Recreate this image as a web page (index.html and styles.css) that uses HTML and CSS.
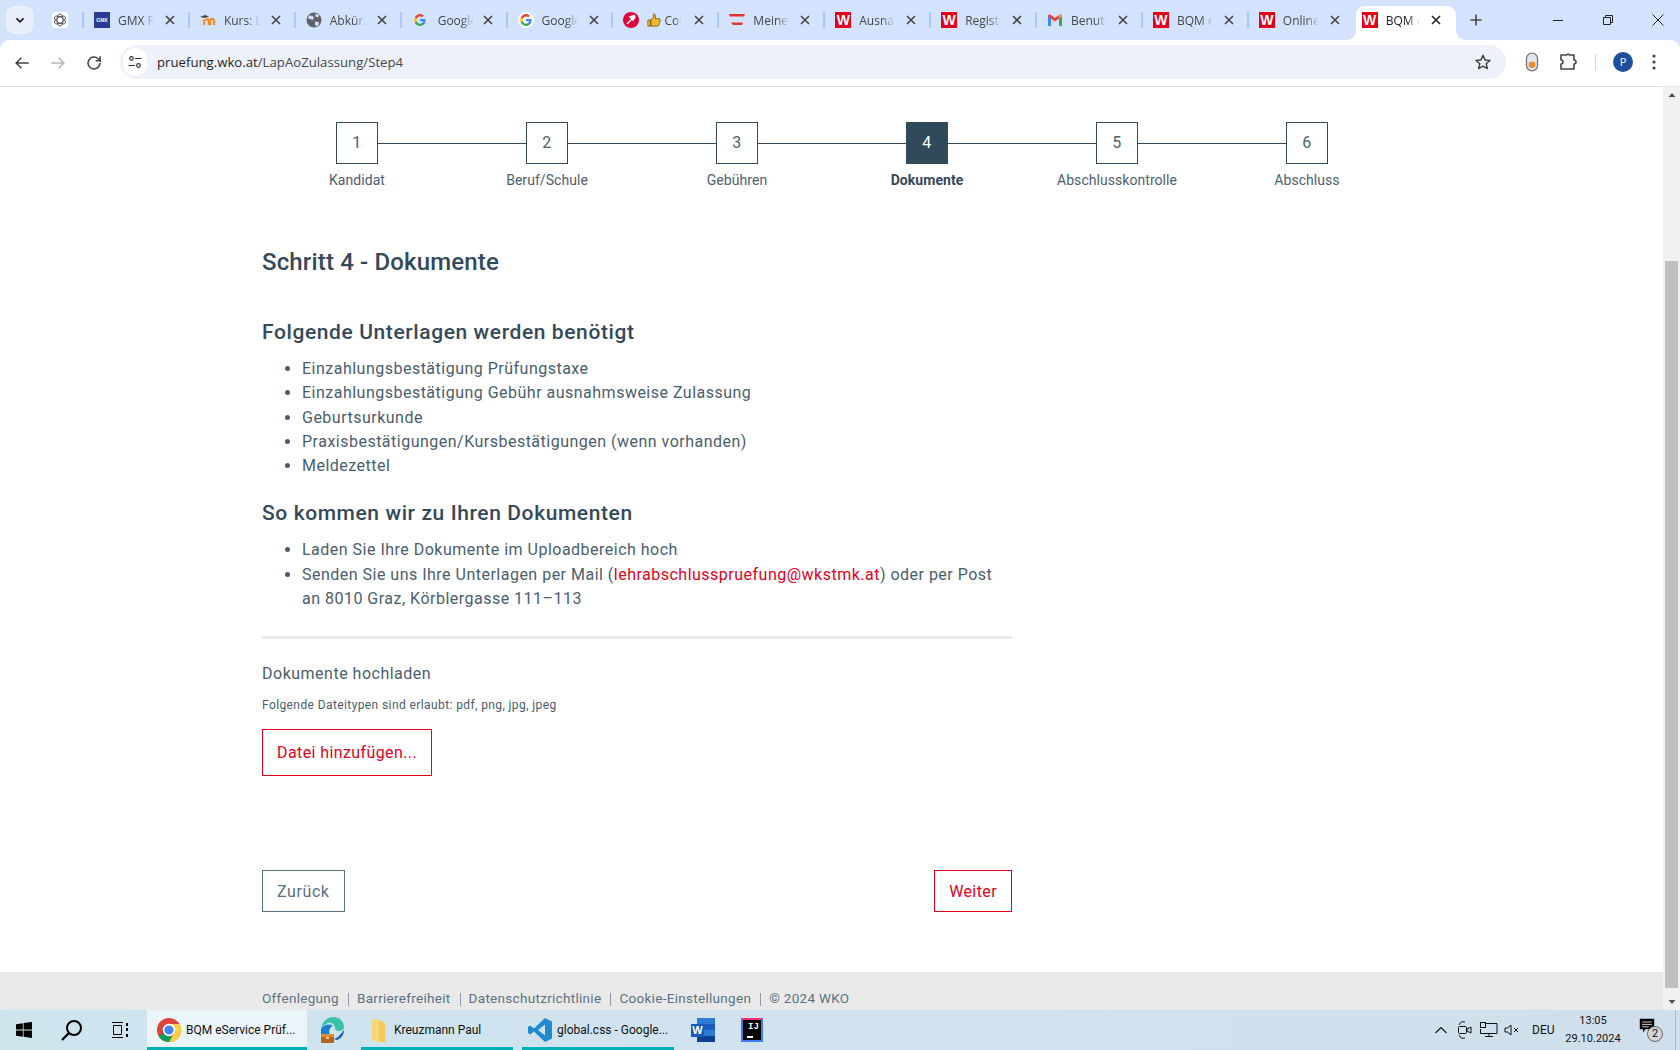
FILE: index.html
```html
<!DOCTYPE html>
<html lang="de">
<head>
<meta charset="utf-8">
<title>BQM eService Prüfung</title>
<link rel="stylesheet" href="styles.css">
</head>
<body>
<svg class="defs" width="0" height="0" aria-hidden="true">
  <symbol id="i-close" viewBox="0 0 16 16"><path d="M4 4l8 8M12 4l-8 8" fill="none" stroke="currentColor" stroke-width="1.6"/></symbol>
  <symbol id="i-g" viewBox="0 0 16 16">
    <path d="M15.4 8.2c0-.6 0-1.100-.2-1.600H8v3h4.100c-.2 1-.7 1.800-1.500 2.300v2h2.500c1.500-1.400 2.300-3.300 2.300-5.700z" fill="#4285f4"/>
    <path d="M8 16c2.100 0 3.800-.7 5.100-1.900l-2.500-2c-.7.500-1.600.8-2.600.8-2 0-3.700-1.400-4.300-3.200H1.100v2C2.400 14.300 5 16 8 16z" fill="#34a853"/>
    <path d="M3.700 9.700c-.3-1-.3-2.400 0-3.400v-2H1.100c-.9 1.800-.9 5.600 0 7.400z" fill="#fbbc05"/>
    <path d="M8 3.200c1.100 0 2.100.4 2.900 1.100l2.200-2.200C11.800.8 10.100 0 8 0 5 0 2.400 1.700 1.100 4.300l2.600 2C4.300 4.500 6 3.200 8 3.200z" fill="#ea4335"/>
  </symbol>
</svg>
<div class="screen">
  <header class="chrome">
    <div class="tabstrip">
      <button class="tab-search"><svg width="12" height="12" viewBox="0 0 12 12"><path d="M2.500 4.300L6 7.800l3.500-3.500" fill="none" stroke="#1f1f1f" stroke-width="1.800"/></svg></button>
      <div class="pinned">
        <span class="fav-chip"><svg width="14" height="14" viewBox="0 0 16 16"><g fill="none" stroke="#444" stroke-width="1"><ellipse cx="8" cy="8" rx="7" ry="3.400" transform="rotate(30 8 8)"/><ellipse cx="8" cy="8" rx="7" ry="3.400" transform="rotate(-30 8 8)"/><ellipse cx="8" cy="8" rx="7" ry="3.400" transform="rotate(90 8 8)"/></g></svg></span>
      </div>
      <div class="tab"><span class="fav gmx">GMX</span><span class="title">GMX F</span><svg class="x"><use href="#i-close"/></svg></div>
      <div class="tab"><svg class="fav" viewBox="0 0 16 16"><path d="M5 7.500c3-2 4.500-1.500 4.500.5v5H7.800V8.500L5 8.500v4.500H3.300V8.500H1z" fill="#f98012"/><path d="M9.500 13V8.500c0-2 1.800-3 3.500-2.500 1.500.4 2 1.500 2 3V13h-1.800V9c0-1.800-2-1.800-2 0v4z" fill="#f98012"/><path d="M0 5l5-2 4 1.500L5 6z" fill="#444"/></svg><span class="title">Kurs: L</span><svg class="x"><use href="#i-close"/></svg></div>
      <div class="tab"><svg class="fav" viewBox="0 0 16 16"><circle cx="8" cy="8" r="7.500" fill="#5f6368"/><path d="M3 3.500l3.500.3 1.500 2L6.500 8l-2-1-2.500-.5zM9 9.500l3.500.5.500 2-2.500 2.500L9 12.500zM9.500 1.500L13 3l-1 2.500-2.500-1z" fill="#d3e3fd"/></svg><span class="title">Abkürz</span><svg class="x"><use href="#i-close"/></svg></div>
      <div class="tab"><svg class="fav small"><use href="#i-g"/></svg><span class="title">Google</span><svg class="x"><use href="#i-close"/></svg></div>
      <div class="tab"><span class="fav g-chip"><svg width="14" height="14"><use href="#i-g"/></svg></span><span class="title">Google</span><svg class="x"><use href="#i-close"/></svg></div>
      <div class="tab tab-col"><svg class="fav" viewBox="0 0 16 16"><circle cx="8" cy="8" r="8" fill="#e2003c"/><path d="M4 12l4.500-4.500M7 5l4-1.500L12 5l-2 3z" stroke="#fff" stroke-width="1.500" fill="#fff"/></svg><svg class="thumb" viewBox="0 0 16 16"><path d="M1 8h3v7H1zM4.500 8l3-3.500V1c1.500 0 2.500 1 2.300 3L9.500 6.500H14c1 0 1.500 1 1 2l-1.500 5.500c-.2.700-.8 1-1.500 1H4.500z" fill="#f3b62b" stroke="#5a4410" stroke-width=".8"/></svg><span class="title t-short">Col</span><svg class="x"><use href="#i-close"/></svg></div>
      <div class="tab"><svg class="fav" viewBox="0 0 16 16"><path d="M0 2h16l-1 2.500H1z" fill="#e3342a"/><path d="M2 10.500h12l-1 2.500H4z" fill="#e3342a"/></svg><span class="title">Meine</span><svg class="x"><use href="#i-close"/></svg></div>
      <div class="tab"><span class="fav wko">W</span><span class="title">Ausnah</span><svg class="x"><use href="#i-close"/></svg></div>
      <div class="tab"><span class="fav wko">W</span><span class="title">Registr</span><svg class="x"><use href="#i-close"/></svg></div>
      <div class="tab"><svg class="fav" viewBox="0 0 16 16"><path d="M1 14V4l3 .8V14z" fill="#4285f4"/><path d="M12 14V4.800L15 4v10z" fill="#34a853"/><path d="M1 4c0-1.500 1.500-2 2.500-1.300L8 6l4.500-3.300C13.500 2 15 2.500 15 4l-3 2.500L8 9.500 4 6.500z" fill="#ea4335"/><path d="M12 2.800L15 4l-3 2.500z" fill="#fbbc05"/></svg><span class="title">Benutz</span><svg class="x"><use href="#i-close"/></svg></div>
      <div class="tab"><span class="fav wko">W</span><span class="title">BQM e</span><svg class="x"><use href="#i-close"/></svg></div>
      <div class="tab"><span class="fav wko">W</span><span class="title">Online</span><svg class="x"><use href="#i-close"/></svg></div>
      <div class="tab active"><span class="fav wko">W</span><span class="title">BQM e</span><svg class="x"><use href="#i-close"/></svg></div>
      <svg class="newtab" width="16" height="16" viewBox="0 0 16 16"><path d="M8 2.500v11M2.500 8h11" stroke="#444" stroke-width="1.600"/></svg>
      <div class="winctl">
        <svg width="16" height="16" viewBox="0 0 16 16"><path d="M3 8.500h10" stroke="#222" stroke-width="1"/></svg>
        <svg width="16" height="16" viewBox="0 0 16 16"><path d="M3.500 5.500h7v7h-7zM5.500 5.500v-2h7v7h-2" fill="none" stroke="#222" stroke-width="1"/></svg>
        <svg width="16" height="16" viewBox="0 0 16 16"><path d="M2.500 2.500l11 11M13.500 2.500l-11 11" stroke="#222" stroke-width="1"/></svg>
      </div>
    </div>
    <div class="toolbar">
      <svg class="tool" viewBox="0 0 16 16"><path d="M14 8H3M7.500 3.300L2.800 8l4.700 4.700" fill="none" stroke="#444" stroke-width="1.400"/></svg>
      <svg class="tool" viewBox="0 0 16 16"><path d="M2 8h11M8.500 3.300L13.200 8l-4.700 4.700" fill="none" stroke="#b4b6b9" stroke-width="1.400"/></svg>
      <svg class="tool" viewBox="0 0 16 16"><path d="M13.300 8a5.300 5.300 0 1 1-1.600-3.800L13.500 6V2M13.500 6H9.500" fill="none" stroke="#444" stroke-width="1.400"/></svg>
      <div class="omnibox">
        <span class="site-chip"><svg width="16" height="16" viewBox="0 0 16 16"><g fill="none" stroke="#333" stroke-width="1.200"><circle cx="4.500" cy="4.500" r="1.800"/><path d="M8 4.500h6.500M1.500 11.500H8"/><circle cx="11.500" cy="11.500" r="1.800"/></g></svg></span>
        <span class="url"><span class="host">pruefung.wko.at</span>/LapAoZulassung/Step4</span>
        <svg class="star" width="18" height="18" viewBox="0 0 18 18"><path d="M9 2.300l2 4.600 5 .5-3.800 3.300 1.100 4.900L9 13.100l-4.300 2.500 1.100-4.900L2 7.400l5-.5z" fill="none" stroke="#444" stroke-width="1.500" stroke-linejoin="round"/></svg>
      </div>
      <svg class="ext1" width="16" height="20" viewBox="0 0 12 18"><rect x="1" y="1" width="10" height="16" rx="5" fill="#e6e6e6" stroke="#777" stroke-width="1.200"/><circle cx="6" cy="11.500" r="3" fill="#f28a30"/></svg>
      <svg class="ext2" width="20" height="20" viewBox="0 0 20 20"><path d="M3 3h5.500a1.800 1.800 0 0 1 3 0H16v5a1.800 1.800 0 0 1 0 4v5H3v-5a1.800 1.800 0 0 0 0-4z" fill="none" stroke="#444" stroke-width="1.600" stroke-linejoin="round"/></svg>
      <span class="tb-sep"></span>
      <span class="avatar">P</span>
      <svg class="menu" width="16" height="18" viewBox="0 0 16 18"><g fill="#444"><circle cx="8" cy="3" r="1.600"/><circle cx="8" cy="9" r="1.600"/><circle cx="8" cy="15" r="1.600"/></g></svg>
    </div>
  </header>
  <div class="viewport">
    <main class="page">
      <div class="content">
        <ol class="stepper">
          <li class="step"><div class="step-top"><span class="line hidden"></span><span class="box">1</span><span class="line"></span></div><span class="step-label">Kandidat</span></li>
          <li class="step"><div class="step-top"><span class="line"></span><span class="box">2</span><span class="line"></span></div><span class="step-label">Beruf/Schule</span></li>
          <li class="step"><div class="step-top"><span class="line"></span><span class="box">3</span><span class="line"></span></div><span class="step-label">Gebühren</span></li>
          <li class="step current"><div class="step-top"><span class="line"></span><span class="box">4</span><span class="line"></span></div><span class="step-label">Dokumente</span></li>
          <li class="step"><div class="step-top"><span class="line"></span><span class="box">5</span><span class="line"></span></div><span class="step-label">Abschlusskontrolle</span></li>
          <li class="step"><div class="step-top"><span class="line"></span><span class="box">6</span><span class="line hidden"></span></div><span class="step-label">Abschluss</span></li>
        </ol>
        <section class="form-col">
          <h1 class="h-step">Schritt 4 - Dokumente</h1>
          <h2 class="h-sec first">Folgende Unterlagen werden benötigt</h2>
          <ul class="doc-list">
            <li>Einzahlungsbestätigung Prüfungstaxe</li>
            <li>Einzahlungsbestätigung Gebühr ausnahmsweise Zulassung</li>
            <li>Geburtsurkunde</li>
            <li>Praxisbestätigungen/Kursbestätigungen (wenn vorhanden)</li>
            <li>Meldezettel</li>
          </ul>
          <h2 class="h-sec second">So kommen wir zu Ihren Dokumenten</h2>
          <ul class="doc-list">
            <li>Laden Sie Ihre Dokumente im Uploadbereich hoch</li>
            <li>Senden Sie uns Ihre Unterlagen per Mail (<a class="mail">lehrabschlusspruefung@wkstmk.at</a>) oder per Post an 8010 Graz, Körblergasse 111–113</li>
          </ul>
          <hr class="rule">
          <p class="upload-title">Dokumente hochladen</p>
          <p class="upload-hint">Folgende Dateitypen sind erlaubt: pdf, png, jpg, jpeg</p>
          <button class="btn btn-red btn-file">Datei hinzufügen...</button>
          <div class="nav-row">
            <button class="btn btn-grey">Zurück</button>
            <button class="btn btn-red">Weiter</button>
          </div>
        </section>
      </div>
      <footer class="page-footer">
        <nav class="foot-links"><a>Offenlegung</a><a>Barrierefreiheit</a><a>Datenschutzrichtlinie</a><a>Cookie-Einstellungen</a><a>© 2024 WKO</a></nav>
      </footer>
    </main>
    <div class="scrollbar">
      <svg class="arrow" width="16" height="16" viewBox="0 0 16 16"><path d="M4.500 10L8 6l3.500 4z" fill="#505050"/></svg>
      <div class="thumb-bar"></div>
      <svg class="arrow" width="16" height="16" viewBox="0 0 16 16"><path d="M4.500 6L8 10l3.500-4z" fill="#505050"/></svg>
    </div>
  </div>
  <footer class="taskbar">
    <span class="tb-start"><svg width="16" height="16" viewBox="0 0 16 16"><path d="M0 2.200l6.800-1V7.600H0zM7.600 1L16 0v7.600H7.600zM0 8.400h6.800v6.400L0 13.800zM7.600 8.400H16V16l-8.400-1.200z" fill="#000"/></svg></span>
    <span class="tb-search"><svg width="24" height="24" viewBox="0 0 24 24"><circle cx="14" cy="10" r="7" fill="none" stroke="#000" stroke-width="2"/><path d="M9 15l-7 7" stroke="#000" stroke-width="2.400"/></svg></span>
    <span class="tb-view"><svg width="18" height="18" viewBox="0 0 18 18"><g fill="none" stroke="#000"><path d="M1 1.500h11M1 16.500h11M2.500 4.500h8v9h-8z"/></g><path d="M15 2h2v3h-2zM15 7h2v3h-2zM15 13h2v3h-2z" fill="#000"/></svg></span>
    <div class="tb-app on first-app">
      <svg width="24" height="24" viewBox="0 0 24 24"><circle cx="12" cy="12" r="12" fill="#db4437"/><path d="M12 12L1.600 18A12 12 0 0 0 12 24c1 0 2-.1 3-.4z" fill="#0f9d58"/><path d="M12 6h10.400A12 12 0 0 1 12 24l5.200-9z" fill="#ffcd40"/><circle cx="12" cy="12" r="5.400" fill="#4285f4" stroke="#fff" stroke-width="1.600"/></svg>
      <span>BQM eService Prüf...</span>
    </div>
    <span class="tb-edge"><svg width="24" height="26" viewBox="0 0 24 26"><path d="M1 12C2 4 8 0 13 0c6 0 11 4 11 10 0 3-3 4-5 4-3 0-4-1-4-3 0-3-3-6-7-5-3 1-6 3-7 6z" fill="#3ac3a4"/><path d="M1 12c2-4 8-6 12-3-3 1-5 5-3 9H1z" fill="#1a7fd1"/><path d="M24 13c0 6-4 9-7 10l-4-1c4 0 7-4 11-9z" fill="#1565b5"/><rect x="1" y="17" width="13" height="9" rx="1" fill="#b5651d"/><rect x="1" y="17" width="13" height="3" fill="#e08a2f"/><rect x="6" y="20" width="3" height="2" fill="#ffd37a"/></svg></span>
    <div class="tb-app on folder-app">
      <svg width="16" height="24" viewBox="0 0 16 24"><path d="M1 1l7 1 6 3v19H5L1 21z" fill="#f8d775"/><path d="M8 2l6 3v19H8z" fill="#f3c95c"/></svg>
      <span>Kreuzmann Paul</span>
    </div>
    <div class="tb-app on vs-app">
      <svg width="24" height="24" viewBox="0 0 24 24"><path d="M17 0l7 3.500v17L17 24 6 13.500l-4 3-2-1.500V9l2-1.500 4 3zM17 6.500L10 12l7 5.500z" fill="#1f8ad2"/></svg>
      <span>global.css - Google...</span>
    </div>
    <span class="tb-word"><svg width="24" height="24" viewBox="0 0 24 24"><rect x="6" y="0" width="18" height="24" fill="#2b7cd3"/><rect x="6" y="6" width="18" height="6" fill="#185abd"/><rect x="6" y="18" width="18" height="6" fill="#103f91"/><rect x="0" y="6" width="13" height="13" fill="#185abd"/></svg><span class="word-w">W</span></span>
    <span class="tb-ij"><span class="ij-tile">IJ<i class="ij-bar"></i></span></span>
    <div class="tray">
      <svg class="t-chev" width="14" height="14" viewBox="0 0 14 14"><path d="M1.500 10L7 4.500 12.500 10" fill="none" stroke="#111" stroke-width="1.100"/></svg>
      <svg class="t-cam" width="16" height="18" viewBox="0 0 16 18"><g fill="none" stroke="#111"><path d="M2 4a5 5 0 0 1 6-3M2 14a5 5 0 0 0 6 3"/><rect x="1.500" y="5.500" width="8" height="7" rx="1"/><path d="M10 8l4-2v6l-4-2z"/></g></svg>
      <svg class="t-net" width="18" height="18" viewBox="0 0 18 18"><g fill="none" stroke="#111"><path d="M5.500 2.500H17v10H.5V8"/><path d="M9 12.500v3M5 15.500h8"/><rect x=".5" y="1.500" width="5" height="5"/></g></svg>
      <svg class="t-snd" width="16" height="16" viewBox="0 0 16 16"><g fill="none" stroke="#111"><path d="M1 6v4h2.500L7 13V3L3.500 6z"/><path d="M10 6l4 4M14 6l-4 4"/></g></svg>
      <span class="t-lang">DEU</span>
      <div class="t-clock"><span>13:05</span><span>29.10.2024</span></div>
      <span class="t-note"><svg width="16" height="16" viewBox="0 0 20 18"><path d="M1 0h18v13H8l-3 4v-4H1z" fill="#000"/><path d="M4 4h12M4 7h12M4 10h8" stroke="#fff"/></svg><span class="note-badge">2</span></span>
      <span class="t-edge"></span>
    </div>
  </footer>
</div>
</body>
</html>
```
FILE: styles.css
```css
* { box-sizing: border-box; }
html, body { margin: 0; height: 100%; overflow: hidden; }
body { font-family: "Roboto", "Liberation Sans", sans-serif; color: #34495a; }
.defs { display: block; width: 0; height: 0; }
.screen { width: 1680px; height: 1050px; display: flex; flex-direction: column; }

/* browser chrome */
.chrome { flex: none; background: #d3e3fd; font-family: "Open Sans", "Noto Sans", sans-serif; }
.tabstrip { height: 40px; display: flex; align-items: flex-start; }
.tab-search { width: 27px; height: 28px; margin: 6px 0 0 6px; padding: 0; border: 0; border-radius: 8px; background: #e9effb; display: flex; align-items: center; justify-content: center; }
.pinned { width: 50px; height: 34px; margin-top: 3px; display: flex; align-items: center; justify-content: flex-end; padding-right: 15px; }
.fav-chip { width: 16px; height: 16px; background: #fff; border-radius: 3px; display: flex; align-items: center; justify-content: center; }
.tab { position: relative; width: 105.9px; height: 34px; margin-top: 3px; display: flex; align-items: center; padding-left: 11px; font-size: 12px; color: #45474a; }
.tab::before { content: ""; position: absolute; left: -1px; top: 9px; width: 2px; height: 16px; background: #a8c7fa; }
.tab.active { width: 100px; height: 34px; margin-top: 6px; margin-left: 2px; background: #fff; border-radius: 9px 9px 0 0; padding-left: 6px; color: #1f1f1f; }
.tab.active .fav { margin-top: -6px; }
.tab.active .title { margin-top: -6px; margin-left: 8px; width: 34px; }
.tab.active .x { top: 6px; left: 72px; color: #222; }
.tab.active::before, .tab.active::after { content: ""; position: absolute; top: auto; bottom: 0; width: 9px; height: 9px; }
.tab.active::before { left: -9px; background: radial-gradient(circle at 0 0, transparent 8.5px, #fff 9px); }
.tab.active::after { right: -9px; background: radial-gradient(circle at 100% 0, transparent 8.5px, #fff 9px); }
.fav { flex: none; width: 16px; height: 16px; }
.small { width: 12px; height: 12px; margin: 0 4px 0 2px; }
.title { margin-left: 8px; width: 36px; overflow: hidden; white-space: nowrap; -webkit-mask-image: linear-gradient(90deg, #000 65%, transparent); mask-image: linear-gradient(90deg, #000 65%, transparent); }
.t-short { margin-left: 3px; width: 17px; }
.x { position: absolute; left: 79px; top: 9px; width: 16px; height: 16px; color: #444; }
.thumb { flex: none; width: 14px; height: 14px; margin-left: 8px; }
.gmx { background: #2d3a94; color: #fff; font: bold 5px/16px "Liberation Sans", sans-serif; text-align: center; overflow: hidden; }
.g-chip { background: #fff; border-radius: 50%; display: flex; align-items: center; justify-content: center; }
.g-chip svg { width: 12px; height: 12px; }
.wko { background: #e2001a; color: #fff; font: bold 14px/16px "Liberation Sans", sans-serif; text-align: center; overflow: hidden; }
.newtab { margin: 12px 0 0 12px; flex: none; }
.winctl { margin-left: auto; display: flex; gap: 34px; padding: 12px 14px 0 0; }
.toolbar { height: 47px; background: #fff; border-bottom: 1px solid #e3e3e3; display: flex; align-items: center; padding: 0 0 0 13px; border-radius: 9px 9px 0 0; }
.tool { width: 18px; height: 18px; margin-right: 18px; flex: none; }
.tool:nth-child(3) { margin-right: 17px; }
.omnibox { width: 1386px; height: 34px; margin-top: -2px; border-radius: 17px; background: #edf2fa; display: flex; align-items: center; padding: 0 14px 0 3px; flex: none; }
.site-chip { width: 24px; height: 28px; background: #fff; border-radius: 14px; display: flex; align-items: center; justify-content: center; }
.url { margin-left: 10px; font-size: 13.2px; color: #45474a; }
.host { color: #1f1f1f; }
.star { margin-left: auto; }
.ext1 { margin: -2px 0 0 18px; flex: none; }
.ext2 { margin: -2px 0 0 18px; flex: none; }
.tb-sep { width: 1px; height: 16px; background: #c8d8f5; margin: -2px 0 0 17px; flex: none; }
.avatar { width: 20px; height: 20px; margin: -2px 0 0 17px; border-radius: 50%; background: #1d4f9c; color: #fff; font-size: 11px; line-height: 20px; text-align: center; flex: none; }
.menu { margin: -2px 0 0 13px; flex: none; }

/* page */
.viewport { flex: 1; min-height: 0; display: flex; background: #fff; }
.page { flex: 1; min-width: 0; display: flex; flex-direction: column; }
.content { flex: 1; width: 1140px; margin: 0 auto; padding-top: 35px; }
.stepper { list-style: none; margin: 0; padding: 0; display: flex; }
.step { width: 190px; display: flex; flex-direction: column; align-items: center; }
.step-top { width: 100%; display: flex; align-items: center; }
.line { flex: 1; height: 1px; background: #34495a; }
.line.hidden { background: transparent; }
.box { width: 42px; height: 42px; padding-bottom: 2px; border: 1px solid #34495a; display: flex; align-items: center; justify-content: center; font-size: 16px; letter-spacing: .4px; color: #4d6070; }
.step-label { margin-top: 6px; font-size: 14px; line-height: 20px; letter-spacing: .05px; color: #4d6070; }
.current .box { background: #304a5a; color: #fff; }
.current .step-label { font-weight: 700; color: #34495a; }
.form-col { width: 750px; }
.h-step { margin: 57px 0 0; font-size: 24px; line-height: 30px; font-weight: 500; letter-spacing: .15px; }
.h-sec { margin: 0; font-size: 21px; line-height: 28px; font-weight: 500; letter-spacing: .6px; }
.h-sec.first { margin-top: 41px; }
.h-sec.second { margin-top: 21px; }
.doc-list { margin: 11px 0 0; padding: 0 0 0 40px; font-size: 16px; line-height: 24.3px; letter-spacing: .49px; color: #4a5d6d; }
.mail { color: #e2001a; }
.rule { border: 0; height: 3px; margin: 25px 0 0; background: #e9e9e9; }
.upload-title { margin: 25px 0 0; font-size: 16px; line-height: 20px; letter-spacing: .5px; color: #4a5d6d; }
.upload-hint { margin: 13px 0 0; font-size: 12px; line-height: 16px; letter-spacing: .4px; color: #4a5d6d; }
.btn { height: 42px; padding: 0 14px; background: #fff; font-family: inherit; font-size: 16px; letter-spacing: .4px; }
.btn-red { border: 1px solid #e2001a; color: #e2001a; }
.btn-grey { border: 1px solid #5a7184; color: #5a7184; letter-spacing: .6px; }
.btn-file { display: block; height: 47px; margin-top: 16px; }
.nav-row { display: flex; justify-content: space-between; margin-top: 94px; }
.page-footer { flex: none; height: 38px; background: #e9e9e9; display: flex; justify-content: center; }
.foot-links { width: 1140px; padding-top: 17px; font-size: 13.5px; line-height: 18px; letter-spacing: .3px; color: #5a7184; display: flex; }
.foot-links a { padding: 0 9px; background: linear-gradient(#8b9aa6, #8b9aa6) left center / 1px 13px no-repeat; }
.foot-links a:first-child { padding-left: 0; background: none; }
.scrollbar { flex: none; width: 17px; margin-left: -1px; background: #f1f1f1; display: flex; flex-direction: column; align-items: center; }
.arrow { flex: none; }
.thumb-bar { width: 13px; height: 727px; margin-top: auto; margin-bottom: 6px; background: #bfbfbf; }

/* taskbar */
.taskbar { flex: none; height: 40px; background: linear-gradient(90deg, #cfe5ee, #d0e2ee 60%, #cfe0ec); display: flex; align-items: center; font-family: "Roboto", sans-serif; font-size: 12px; color: #111; }
.tb-start { width: 16px; margin-left: 16px; display: flex; }
.tb-search { margin-left: 28px; display: flex; }
.tb-view { margin-left: 27px; display: flex; }
.tb-app { height: 40px; display: flex; align-items: center; }
.tb-app span { margin-left: 5px; white-space: nowrap; }
.on { border-bottom: 3px solid #00b0b9; padding-top: 3px; }
.first-app { width: 160px; margin-left: 18px; padding-left: 10px; background: #eaf4f9; }
.tb-edge { margin-left: 13px; display: flex; }
.folder-app { width: 152px; margin-left: 17px; padding-left: 10px; }
.folder-app span { margin-left: 7px; }
.vs-app { width: 152px; margin-left: 9px; padding-left: 6px; }
.tb-word { position: relative; margin-left: 17px; display: flex; }
.word-w { position: absolute; left: 1px; top: 6px; width: 11px; color: #fff; font: bold 11px/13px "Liberation Sans", sans-serif; text-align: center; }
.tb-ij { margin-left: 26px; display: flex; }
.ij-tile { position: relative; width: 22px; height: 24px; padding: 3px 0 0 5px; background: #000; border: 2px solid #3c7bf0; border-top-color: #ff2d78; color: #fff; font: bold 9px/9px "Liberation Mono", monospace; }
.ij-bar { position: absolute; left: 4px; bottom: 2px; width: 6px; height: 2px; background: #fff; }
.tray { margin-left: auto; height: 40px; display: flex; align-items: center; }
.t-chev { margin-right: 9px; }
.t-cam { margin-right: 7px; }
.t-net { margin-right: 6px; }
.t-lang { width: 22px; margin-left: 12px; text-align: center; }
.t-clock { width: 56px; margin-left: 11px; font-size: 11px; display: flex; flex-direction: column; align-items: center; line-height: 18px; white-space: nowrap; }
.t-note { position: relative; width: 24px; height: 24px; margin-left: 18px; display: flex; }
.note-badge { position: absolute; left: 8px; top: 8px; width: 16px; height: 16px; border-radius: 50%; background: #d5d5d5; border: 1px solid #666; font-size: 11px; line-height: 14px; text-align: center; }
.t-edge { width: 1px; height: 40px; margin: 0 4px 0 12px; background: #a9bcc8; }
```
